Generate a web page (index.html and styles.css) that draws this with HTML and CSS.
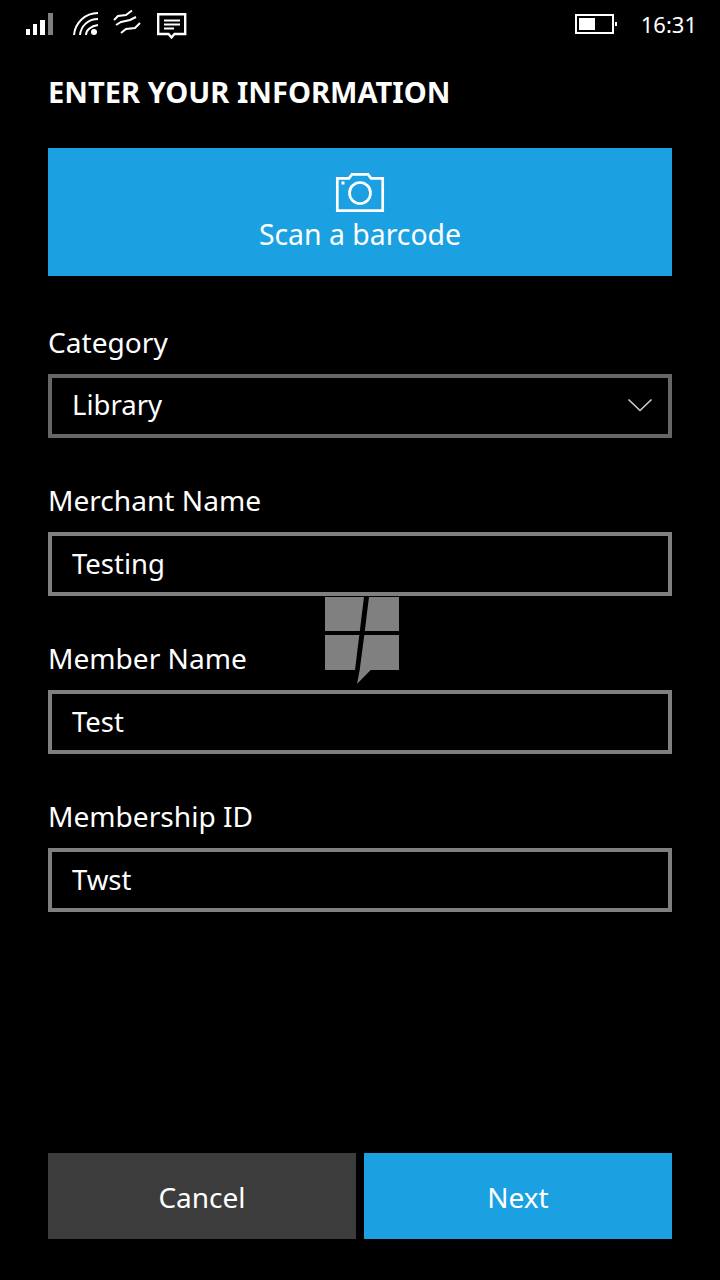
FILE: index.html
```html
<!DOCTYPE html>
<html lang="en">
<head>
<meta charset="utf-8">
<title>Enter your information</title>
<link rel="stylesheet" href="styles.css">
</head>
<body>
<div class="screen">
  <header class="status">
    <div class="status-left">
      <svg class="ic-signal" width="30" height="24" viewBox="0 0 30 24">
        <rect x="0" y="17" width="4" height="6" fill="#fff"/>
        <rect x="7" y="12" width="4" height="11" fill="#fff"/>
        <rect x="14" y="8" width="5" height="15" fill="#fff"/>
        <rect x="22" y="1" width="5" height="22" fill="#808080"/>
      </svg>
      <svg class="ic-wifi" width="26" height="26" viewBox="0 0 26 26" fill="none" stroke="#fff" stroke-width="2">
        <path d="M1 24C2 12 12 2 25 2"/>
        <path d="M7 24C8 15 15 8 25 8"/>
        <path d="M13 24C13 19 18 15 25 14"/>
        <circle cx="21" cy="21" r="3" fill="#fff" stroke="none"/>
      </svg>
      <svg class="ic-wave" width="28" height="24" viewBox="0 0 28 24" fill="none" stroke="#fff" stroke-width="2">
        <path d="M1 10L5 6L13 5L19 0.500"/>
        <path d="M3 15L8 12L17 10L23 7"/>
        <path d="M8 23L13 19L22 18L27 13"/>
      </svg>
      <svg class="ic-msg" width="30" height="28" viewBox="0 0 30 28" fill="none" stroke="#fff" stroke-width="2.4">
        <path d="M1.2 1.2H28.2V21H17.5L14.5 24.5L11.5 21H1.2Z"/>
        <path d="M7 7.5H23M7 11.5H23M7 15.5H17" stroke-width="1.8"/>
      </svg>
    </div>
    <div class="status-right">
      <svg class="ic-batt" width="42" height="20" viewBox="0 0 42 20">
        <rect x="1" y="1" width="37" height="18" fill="none" stroke="#fff" stroke-width="2"/>
        <rect x="4" y="4" width="16" height="12" fill="#fff"/>
        <rect x="40" y="8" width="2" height="4" fill="#fff"/>
      </svg>
      <span class="clock">16:31</span>
    </div>
  </header>

  <main class="content">
    <h1 class="title">ENTER YOUR INFORMATION</h1>
    <button class="scan" type="button">
      <svg class="ic-camera" width="50" height="42" viewBox="0 0 50 42" fill="none" stroke="#fff" stroke-width="2.7">
        <path d="M2.300 7.300H14L17 3.300H33L36 7.300H47.700V39.700H2.300Z"/>
        <circle cx="25" cy="22" r="10.500"/>
        <rect x="6.500" y="10.500" width="3" height="3" fill="#fff" stroke="none"/>
      </svg>
      <span>Scan a barcode</span>
    </button>

    <div class="field">
      <div class="label">Category</div>
      <div class="box box-select">
        <span>Library</span>
        <svg class="chev" width="26" height="14" viewBox="0 0 26 14" fill="none" stroke="#d0d0d0" stroke-width="1.600">
          <path d="M1.500 1.500L13 12.500L24.500 1.500"/>
        </svg>
      </div>
    </div>
    <div class="field">
      <div class="label">Merchant Name</div>
      <div class="box">Testing</div>
    </div>
    <div class="field">
      <div class="label">Member Name</div>
      <div class="box">Test</div>
    </div>
    <div class="field">
      <div class="label">Membership ID</div>
      <div class="box">Twst</div>
    </div>
  </main>

  <footer class="actions">
    <button class="btn btn-cancel" type="button">Cancel</button>
    <button class="btn btn-next" type="button">Next</button>
  </footer>

  <svg class="watermark" width="74" height="88" viewBox="0 0 74 88">
    <path fill="#808080" d="M0 0H39L34.800 34H0Z"/>
    <path fill="#808080" d="M44 0H74V34H39.800Z"/>
    <path fill="#808080" d="M0 38H34.300L30 73H0Z"/>
    <path fill="#808080" d="M39.300 38H74V73H45.700L32 87L34.700 73Z"/>
  </svg>
</div>
</body>
</html>
```

FILE: styles.css
```css
* { box-sizing: border-box; }
html, body { margin: 0; padding: 0; background: #000; }
body { font-family: "Noto Sans", "Open Sans", sans-serif; font-weight: 400; color: #fff; }

.screen {
  position: relative;
  width: 720px;
  height: 1280px;
  background: #000;
  display: flex;
  flex-direction: column;
  overflow: hidden;
}

.status {
  height: 48px;
  padding: 12px 23px 0 26px;
  display: flex;
  justify-content: space-between;
  align-items: flex-start;
  flex: none;
}
.status-left { display: flex; align-items: flex-start; }
.ic-signal { margin-right: 17px; }
.ic-wifi { margin-right: 14px; margin-top: -1px; }
.ic-wave { margin-right: 16px; margin-top: -2px; }
.ic-msg { margin-top: 1px; }
.status-right { display: flex; align-items: center; height: 24px; }
.ic-batt { margin-right: 24px; }
.clock { font-size: 22px; line-height: 24px; font-weight: 400; }

.content {
  flex: 1;
  padding: 0 48px;
  display: flex;
  flex-direction: column;
}
.title {
  margin: 25px 0 36px;
  font-size: 29.100px;
  line-height: 39px;
  font-weight: 700;
}

.scan {
  width: 100%;
  height: 128px;
  border: 0;
  padding: 24px 0 0;
  background: #1ba1e2;
  color: #fff;
  font: inherit;
  font-size: 28.400px;
  line-height: 38px;
  display: flex;
  flex-direction: column;
  align-items: center;
  margin-bottom: 47px;
}
.ic-camera { display: block; margin: -1px 0 2px; }

.field { margin-bottom: 43px; }
.label {
  font-size: 28.100px;
  line-height: 38px;
  height: 40px;
  margin-bottom: 11px;
}
.box {
  height: 64px;
  border: 4px solid #7f7f7f;
  padding: 0 20px;
  font-size: 27.500px;
  line-height: 54px;
  display: flex;
  align-items: center;
}
.box-select {
  border-color: #666;
  justify-content: space-between;
  padding: 0 15px 2px 20px;
}
.chev { display: block; }

.actions {
  flex: none;
  height: 127px;
  padding: 0 48px 41px;
  display: flex;
  gap: 8px;
}
.btn {
  flex: 1;
  border: 0;
  padding: 2px 0 0;
  color: #fff;
  font: inherit;
  font-size: 28px;
}
.btn-cancel { background: #3c3c3c; }
.btn-next { background: #1ba1e2; }

.watermark {
  position: absolute;
  left: 325px;
  top: 597px;
}
```
